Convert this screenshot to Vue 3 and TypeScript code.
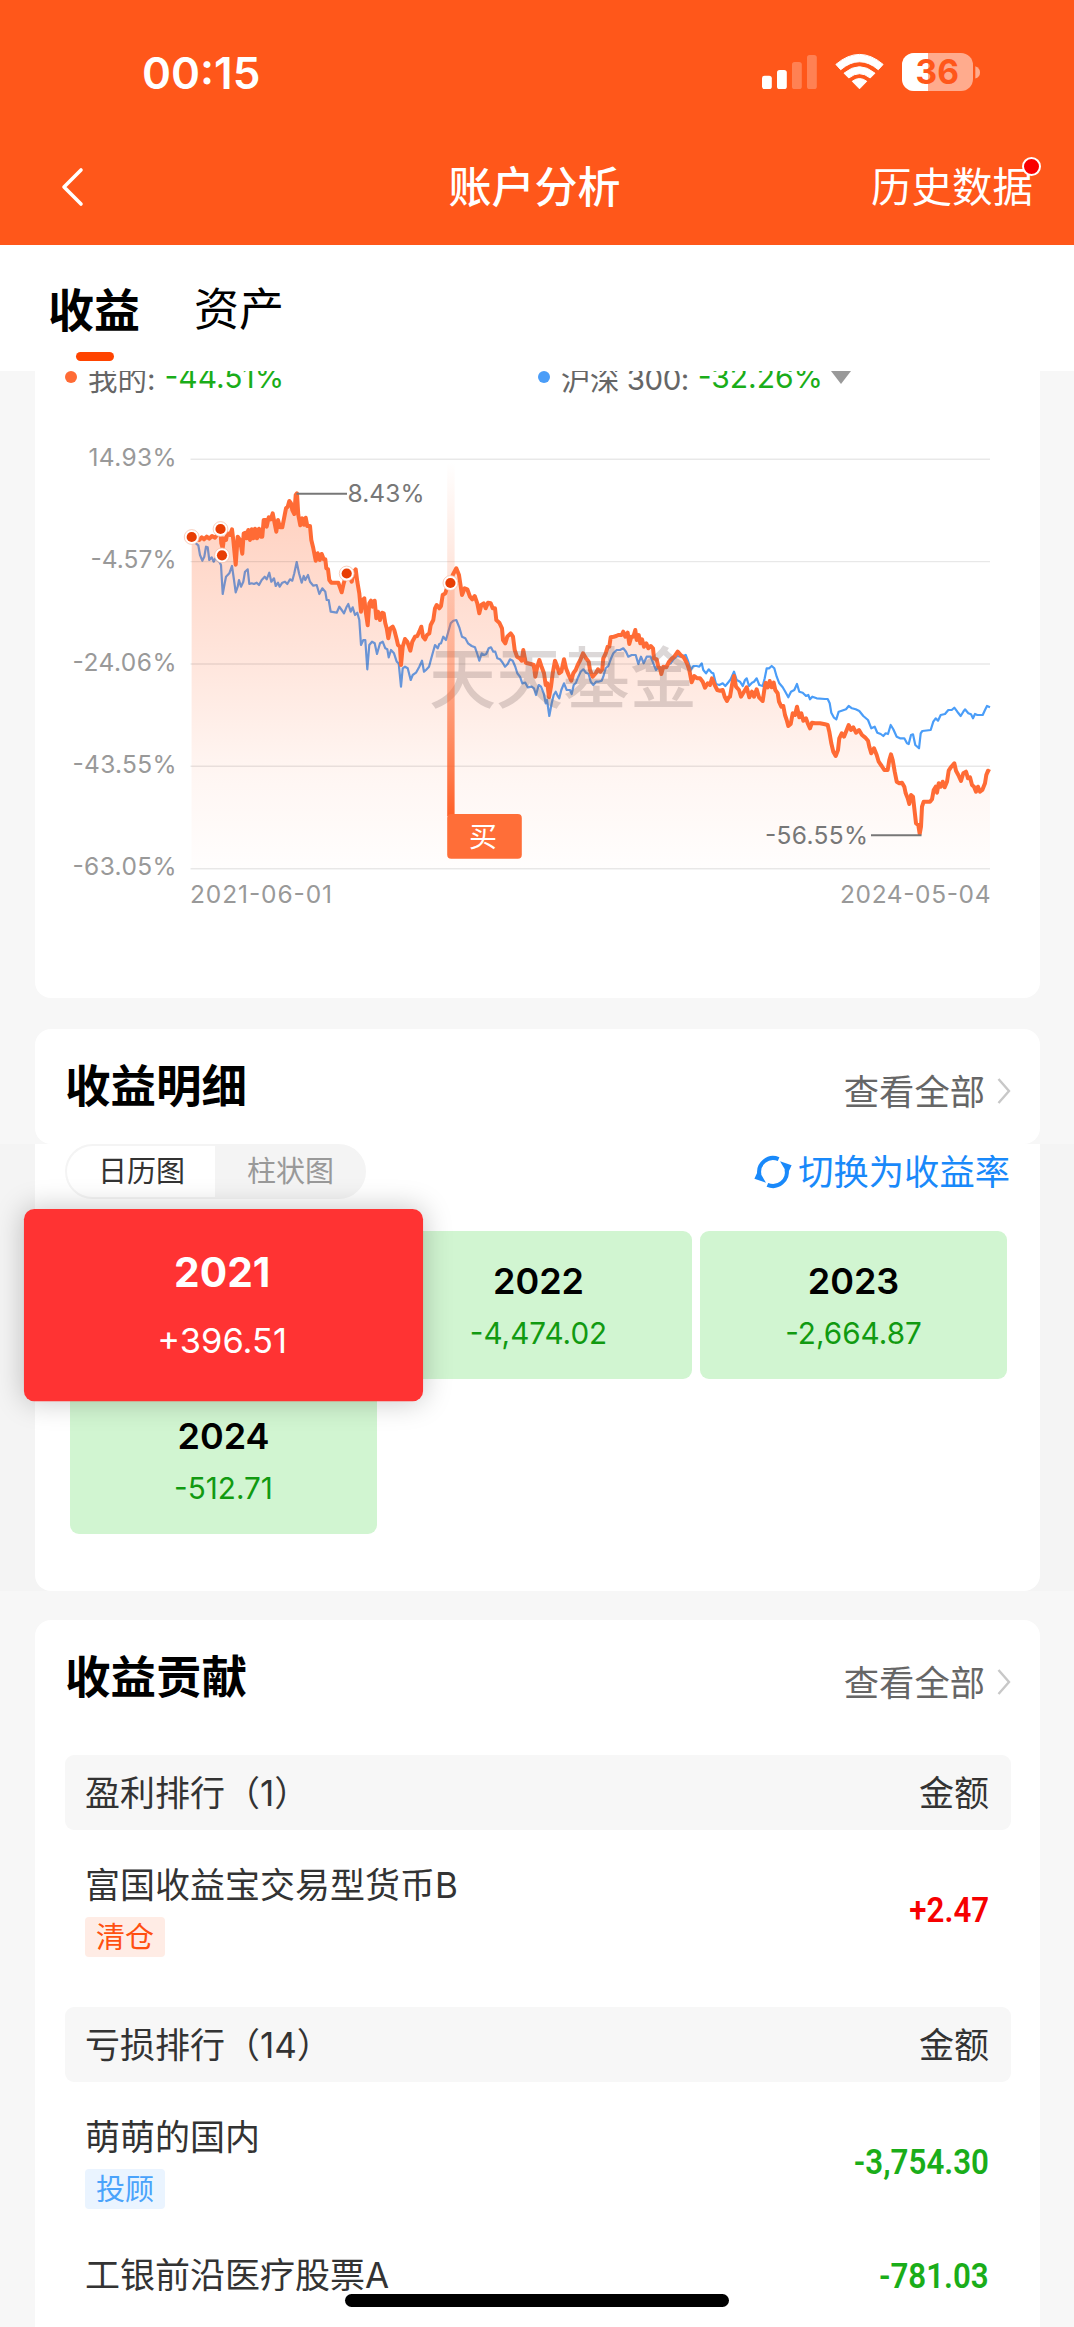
<script setup lang="ts">
interface Origin { x: number; y: number }
interface YearCell { year: string; value: string; active: boolean }
interface RankItem { name: string; tag?: string; tone?: 'warm' | 'cool'; amount: string; gain: boolean }
interface RankGroup { title: string; items: RankItem[] }

// Samples are stored in thirds of a pixel, relative to the origin of each stretch of the line.
const trace = (o: Origin, samples: string): string =>
  samples
    .split(' ')
    .map((p) => {
      const [x, y] = p.split(',').map(Number)
      return `${(o.x + x / 3).toFixed(1)},${(o.y + y / 3).toFixed(1)}`
    })
    .join(' ')

const early: Origin = { x: 170, y: 440 }
const middle: Origin = { x: 440, y: 540 }
const late: Origin = { x: 730, y: 600 }

const mine = [
  trace(early, '65,291 88,300 95,292 102,298 110,290 118,296 126,288 135,293 140,286 147,270 151,267 154,310 158,325 162,295 168,300 172,280 180,285 186,268 190,300 197,374 203,290 210,300 217,341 221,280 227,278 230,295 235,270 240,300 245,268 250,295 255,266 261,295 267,266 272,290 277,290 281,240 287,240 290,260 296,232 302,238 308,220 313,245 319,275 324,240 330,262 337,262 344,225 348,205 353,200 358,183 363,190 367,210 373,222 377,165 381,160 385,225 391,256 397,235 402,254 407,233 412,258 420,258 424,300 430,325 437,362 443,340 449,360 455,342 461,358 466,358 469,385 474,388 478,420 484,428 505,428 509,440 515,457 521,430 530,401 540,412 545,425 552,395 557,388 562,425 568,460 573,515 578,480 583,475 587,515 593,556 598,490 603,482 608,500 614,482 619,535 624,515 630,540 636,518 641,520 646,550 650,565 655,595 661,565 668,560 673,570 680,598 684,615 690,620 693,675 698,620 705,597 712,605 721,632 727,605 735,590 742,588 748,575 754,560 759,590 765,598 771,585 778,580 782,555 790,540 795,505 800,495 808,505'),
  trace(middle, '3,198 8,165 16,160 22,140 31,128 38,105 49,85 57,105 60,125 66,165 74,145 82,148 90,170 97,178 104,168 112,190 118,220 124,195 131,190 137,205 144,188 152,190 158,205 165,205 169,240 178,248 186,265 189,300 196,310 202,290 212,280 219,290 224,330 231,350 239,355 245,362 250,330 257,368 272,372 281,375 286,410 292,380 298,360 304,378 312,400 317,435 322,430 327,472 333,440 338,400 345,362 352,380 358,400 364,395 372,358 378,385 386,405 394,422 400,400 407,390 413,375 421,360 429,340 438,355 446,365 450,390 458,410 467,400 474,388 481,395 487,388 490,355 497,340 503,320 508,320 512,292 521,290 529,288 535,285 545,285 550,275 556,290 563,278 568,312 574,290 580,290 586,270 590,300 596,285 601,310 606,298 612,320 619,310 625,325 632,318 639,325 642,355 650,358 655,380 660,385 664,402 670,380 679,382 687,365 696,355 703,350 713,335 722,345 731,352 740,368 748,390 755,427 763,408 771,415 780,415 788,425 795,443 803,430 810,435 816,415 824,435 832,450 840,452 848,450 854,470 861,483 866,472'),
  trace(late, '0,290 6,255 12,228 18,260 27,270 33,290 42,275 50,262 58,292 66,275 72,290 80,268 87,292 98,303 103,270 107,248 113,262 119,243 125,262 131,248 136,270 143,280 147,305 154,320 160,318 165,345 170,360 175,378 182,372 188,340 195,345 201,320 208,352 214,340 220,362 228,355 234,372 240,385 246,368 255,370 270,370 285,373 293,375 298,395 304,430 310,455 317,468 324,450 328,415 335,400 342,410 350,390 356,375 363,390 370,382 378,398 387,390 396,405 405,412 414,422 418,440 424,460 432,445 440,465 446,485 455,498 463,510 473,510 478,480 483,463 488,480 494,515 500,545 508,550 516,548 523,560 527,580 533,595 538,612 543,585 549,590 553,625 558,670 565,675 569,702 573,680 576,620 581,605 600,605 606,598 611,570 617,560 621,578 626,550 632,560 638,545 644,562 651,545 656,512 664,500 673,490 678,512 685,525 693,543 700,520 708,515 714,535 720,532 726,555 732,560 738,575 744,560 750,575 757,570 765,550 769,525 774,512 780,515'),
].join(' ')

const benchmark = [
  trace(early, '65,300 75,308 85,316 90,345 97,362 103,350 108,320 113,322 118,360 125,352 131,365 136,355 148,365 153,375 158,462 164,430 168,410 178,400 186,378 192,420 197,457 203,440 207,420 213,440 220,425 225,395 233,388 238,432 245,430 252,432 260,428 267,435 275,420 284,410 290,418 298,398 304,425 312,415 317,438 324,428 329,440 337,428 345,425 352,432 360,418 367,422 373,400 380,366 387,400 395,428 401,408 406,420 414,405 420,425 430,437 440,435 448,462 457,445 466,455 470,480 476,480 482,515 500,518 508,500 515,510 522,520 530,500 535,492 542,515 548,502 555,525 562,518 568,540 573,615 580,600 586,600 592,688 598,615 606,605 614,610 621,642 630,610 638,605 646,625 652,628 656,652 663,630 672,640 680,665 686,670 693,740 698,685 705,680 713,685 722,720 728,705 738,698 748,680 756,662 762,695 768,690 777,680 785,650 795,615 803,625 808,612'),
  trace(middle, '3,310 10,290 18,300 25,275 32,250 40,242 49,240 58,262 66,290 76,295 84,310 95,318 105,322 112,342 118,362 125,340 132,345 139,342 146,325 153,322 160,335 166,335 172,355 180,358 188,368 195,380 203,372 210,358 218,362 226,380 232,400 240,410 247,430 256,428 263,442 275,440 282,445 288,465 296,435 303,440 311,460 317,490 321,480 328,528 335,490 341,465 347,455 353,468 358,475 364,450 372,430 380,450 390,450 395,462 401,435 408,428 415,410 422,395 430,388 438,398 446,402 452,425 460,435 468,425 475,425 485,422 490,410 497,385 505,378 512,358 520,340 530,330 540,330 550,325 558,335 565,350 575,345 587,345 595,372 603,350 611,370 620,350 632,350 640,370 648,390 656,380 664,395 672,380 682,375 692,370 700,358 712,348 722,350 737,345 745,365 752,390 760,378 770,378 778,380 785,370 790,390 798,400 806,388 815,398 820,400 828,432 838,435 848,430 856,438 864,428'),
  trace(late, '2,238 12,215 20,240 30,245 38,258 45,240 50,235 57,258 66,248 72,245 80,235 88,255 98,258 104,235 110,205 117,205 125,198 133,205 140,230 148,250 158,262 166,275 175,292 183,275 193,270 201,252 208,275 218,278 228,288 235,285 240,298 247,290 260,295 285,297 293,297 299,310 304,338 312,353 319,358 326,335 335,332 348,328 356,318 366,325 377,328 388,333 400,348 414,360 424,385 434,380 442,398 452,402 460,408 467,400 474,402 482,375 490,388 500,410 510,415 523,415 531,430 536,432 543,405 549,403 556,435 567,445 572,400 577,393 602,390 610,365 617,355 624,362 632,345 645,342 655,330 665,330 673,323 682,335 692,348 700,335 705,328 715,340 723,343 729,355 735,342 742,345 758,345 765,330 771,318 780,322'),
].join(' ')

const area = `191.5,868.7 ${mine} 990,868.7`

const axis = [
  { label: '14.93%', y: 459.3, w: 88 },
  { label: '-4.57%', y: 561.6, w: 86 },
  { label: '-24.06%', y: 664, w: 104 },
  { label: '-43.55%', y: 766.3, w: 104 },
  { label: '-63.05%', y: 868.7, w: 104 },
]

const markers = [
  { x: 191.7, y: 537 },
  { x: 220.5, y: 529 },
  { x: 222, y: 555.3 },
  { x: 346.7, y: 573.5 },
  { x: 450.4, y: 583 },
]

const years: YearCell[] = [
  { year: '2021', value: '+396.51', active: true },
  { year: '2022', value: '-4,474.02', active: false },
  { year: '2023', value: '-2,664.87', active: false },
  { year: '2024', value: '-512.71', active: false },
]

const groups: RankGroup[] = [
  {
    title: '盈利排行（1）',
    items: [{ name: '富国收益宝交易型货币B', tag: '清仓', tone: 'warm', amount: '+2.47', gain: true }],
  },
  {
    title: '亏损排行（14）',
    items: [
      { name: '萌萌的国内', tag: '投顾', tone: 'cool', amount: '-3,754.30', gain: false },
      { name: '工银前沿医疗股票A', amount: '-781.03', gain: false },
    ],
  },
]
</script>

<template>
  <div class="page">
    <header class="top">
      <div class="status">
        <span class="time">00:15</span>
        <svg class="indicators" width="222" height="44" viewBox="760 50 222 44">
          <rect x="762" y="75.7" width="9.8" height="13.4" rx="2.6" fill="#fff" />
          <rect x="777" y="70" width="9.8" height="19.1" rx="2.6" fill="#fff" />
          <rect x="792" y="62" width="9.8" height="27.1" rx="2.6" fill="#fff" fill-opacity=".25" />
          <rect x="807" y="55" width="9.8" height="34.1" rx="2.6" fill="#fff" fill-opacity=".25" />
          <path d="M835.9 64.4 Q859.5 44.4 883.1 64.4 L878.3 69.7 Q859.5 53.8 840.7 69.7 Z" fill="#fff" stroke="#fff" stroke-width="1" stroke-linejoin="round" />
          <path d="M844 73.2 Q859.5 60.2 875 73.2 L870.2 78 Q859.5 69.4 848.8 78 Z" fill="#fff" stroke="#fff" stroke-width="1" stroke-linejoin="round" />
          <path d="M852.2 81.3 Q859.5 75.8 866.8 81.3 L859.5 88.8 Z" fill="#fff" stroke="#fff" stroke-width="1" stroke-linejoin="round" />
          <clipPath id="cell"><rect x="902" y="53" width="71" height="38" rx="12" /></clipPath>
          <g clip-path="url(#cell)">
            <rect x="902" y="53" width="71" height="38" fill="#fff" fill-opacity=".5" />
            <rect x="902" y="53" width="26" height="38" fill="#fff" />
          </g>
          <path d="M975.3 66.3 Q980 68 980 72.4 Q980 77 975.3 78.6 Z" fill="#fff" fill-opacity=".5" />
          <text x="937.3" y="84.2" class="charge" text-anchor="middle">36</text>
        </svg>
      </div>
      <nav class="nav">
        <svg class="back" width="26" height="40" viewBox="0 0 26 40"><path d="M22 3 L5 20 L22 37" fill="none" stroke="#fff" stroke-width="3.6" stroke-linecap="round" stroke-linejoin="round" /></svg>
        <h1>账户分析</h1>
        <span class="history">历史数据<i class="dot"></i></span>
      </nav>
    </header>

    <div class="tabs">
      <span class="tab on">收益</span>
      <span class="tab">资产</span>
    </div>

    <section class="card chart-card">
      <div class="legend">
        <div class="series"><i class="bullet mine"></i><span>我的:</span><b>-44.51%</b></div>
        <div class="series"><i class="bullet bench"></i><span class="index">沪深 300:</span><b>-32.26%</b><i class="caret"></i></div>
      </div>
      <svg class="chart" width="1005" height="500" viewBox="35 420 1005 500">
        <defs>
          <linearGradient id="fill" gradientUnits="userSpaceOnUse" x1="0" y1="493" x2="0" y2="869">
            <stop offset="0" stop-color="#ff6b35" stop-opacity=".32" />
            <stop offset=".45" stop-color="#ff6b35" stop-opacity=".17" />
            <stop offset=".75" stop-color="#ff6b35" stop-opacity=".06" />
            <stop offset="1" stop-color="#ff6b35" stop-opacity=".01" />
          </linearGradient>
          <linearGradient id="beam" x1="0" y1="0" x2="0" y2="1">
            <stop offset="0" stop-color="#ff6b35" stop-opacity="0" />
            <stop offset=".3" stop-color="#ff6b35" stop-opacity=".17" />
            <stop offset=".6" stop-color="#ff6b35" stop-opacity=".5" />
            <stop offset="1" stop-color="#ff6028" stop-opacity="1" />
          </linearGradient>
        </defs>
        <polyline :points="benchmark" fill="none" stroke="#4a9df8" stroke-width="2.2" stroke-linejoin="round" />
        <polygon :points="area" fill="url(#fill)" />
        <g v-for="a in axis" :key="a.label">
          <line x1="190.5" x2="990" :y1="a.y" :y2="a.y" stroke="#000" stroke-opacity=".09" stroke-width="1.4" />
          <text class="tick" x="176.5" :y="a.y + 6.6" text-anchor="end" :textLength="a.w">{{ a.label }}</text>
        </g>
        <polyline :points="mine" fill="none" stroke="#ff6b35" stroke-width="4" stroke-linejoin="round" />
        <text class="watermark" x="429" y="703" textLength="268">天天基金</text>
        <rect x="447.2" y="462" width="7.4" height="354" fill="url(#beam)" />
        <g v-for="m in markers" :key="m.x">
          <circle :cx="m.x" :cy="m.y" r="7.4" fill="#fff" stroke="#f4b9a2" stroke-width=".7" />
          <circle :cx="m.x" :cy="m.y" r="5.1" fill="#e83e04" />
        </g>
        <path d="M296.5 493.8 H347" stroke="#777" stroke-width="2" />
        <text class="note" x="347.5" y="502.3" textLength="77">8.43%</text>
        <path d="M871 835.2 H921.5" stroke="#777" stroke-width="2" />
        <text class="note" x="765" y="843.6" textLength="103">-56.55%</text>
        <rect x="447.2" y="814" width="74.6" height="44.7" rx="4" fill="#ff6e38" />
        <text class="buy" x="483" y="846.5" text-anchor="middle">买</text>
        <text class="tick" x="190" y="903" textLength="142">2021-06-01</text>
        <text class="tick" x="990.5" y="903" text-anchor="end" textLength="150.5">2024-05-04</text>
      </svg>
    </section>

    <section class="card head-card">
      <h2>收益明细</h2>
      <span class="more"><span>查看全部</span><svg width="14" height="28" viewBox="0 0 14 28"><path d="M1.5 2 L12 14 L1.5 26" fill="none" stroke="#c8c8c8" stroke-width="2.4" /></svg></span>
    </section>
    <div class="band">
      <section class="detail">
        <div class="tools">
          <div class="segment"><span class="sel">日历图</span><span>柱状图</span></div>
          <span class="switch">
            <svg width="38" height="38" viewBox="0 0 38 38" fill="none" stroke="#1989fa" stroke-width="4">
              <path d="M5.5 22 A13.9 13.9 0 0 1 24.6 6.2" />
              <path d="M32.5 16 A13.9 13.9 0 0 1 13.4 31.8" />
              <path d="M26 8.3 L37.6 12.3 L33.6 21 Z M12 29.7 L0.4 25.7 L4.4 17 Z" fill="#1989fa" stroke="none" />
            </svg><span>切换为收益率</span></span>
        </div>
        <div class="years">
          <div v-for="y in years" :key="y.year" class="year" :class="{ active: y.active }">
            <strong>{{ y.year }}</strong>
            <span>{{ y.value }}</span>
          </div>
        </div>
      </section>
    </div>

    <section class="card rank-card">
      <div class="rank-head">
        <h2>收益贡献</h2>
        <span class="more"><span>查看全部</span><svg width="14" height="28" viewBox="0 0 14 28"><path d="M1.5 2 L12 14 L1.5 26" fill="none" stroke="#c8c8c8" stroke-width="2.4" /></svg></span>
      </div>
      <div v-for="g in groups" :key="g.title" class="group">
        <div class="bar"><span>{{ g.title }}</span><span>金额</span></div>
        <div v-for="it in g.items" :key="it.name" class="item" :class="{ plain: !it.tag }">
          <div class="info">
            <span class="fund">{{ it.name }}</span>
            <span v-if="it.tag" class="tag" :class="it.tone">{{ it.tag }}</span>
          </div>
          <span class="amount" :class="{ gain: it.gain }">{{ it.amount }}</span>
        </div>
      </div>
    </section>
    <div class="home"></div>
  </div>
</template>

<style>
body { background: #f7f7f7; overflow: hidden; }
</style>

<style scoped>
* { box-sizing: border-box; }
.page {
  position: relative;
  width: 1074px;
  height: 2327px;
  overflow: hidden;
  background: #f7f7f7;
  color: #333;
  font-family: Inter, "Noto Sans CJK SC", sans-serif;
  white-space: nowrap;
}
h1, h2 { margin: 0; }
i, b { font-style: normal; font-weight: 400; }
svg { display: block; flex: none; }

.top { height: 245px; background: #ff571a; color: #fff; }
.status { display: flex; justify-content: space-between; height: 129px; padding: 50px 92px 0 142px; }
.time { font-size: 44px; line-height: 47px; font-weight: 600; }
.charge { font-size: 33.5px; font-weight: 700; fill: #ff571a; }
.nav { display: flex; align-items: center; justify-content: space-between; height: 116px; padding: 0 41px 0 59px; }
.back { margin-right: 113px; }
h1 { font-size: 43px; font-weight: 500; line-height: 60px; }
.history { position: relative; font-size: 40.5px; line-height: 60px; padding-top: 2px; }
.dot { position: absolute; top: 1px; right: -8px; width: 19px; height: 19px; border: 2px solid #fff; border-radius: 50%; background: #fa0000; }

.tabs { display: flex; gap: 54px; height: 126px; padding: 35px 0 0 49px; background: #fff; font-size: 45px; line-height: 60px; color: #000; }
.tab { height: 83px; }
.tab.on { font-weight: 700; font-size: 46px; margin-left: -1px; display: flex; flex-direction: column; align-items: center; }
.tab.on::after { content: ""; width: 38px; height: 9px; margin: 12px 0 0 2px; border-radius: 5px; background: #ff4400; }

.card { margin: 0 34px 0 35px; background: #fff; }
.chart-card { height: 627px; border-radius: 0 0 16px 16px; overflow: hidden; }
.legend { display: flex; height: 49px; padding-left: 30px; }
.series { display: flex; align-items: center; width: 473px; height: 40px; margin-top: -14px; font-size: 29.5px; color: #666; }
.bullet { width: 12px; height: 12px; border-radius: 50%; margin-right: 11px; }
.bullet.mine { background: #ff6b35; }
.bullet.bench { background: #4a9df8; }
.index { letter-spacing: -.5px; }
.series b { margin-left: 9px; font-size: 30px; color: #1aad19; }
.caret { margin-left: 8px; border: 10px solid transparent; border-top: 13px solid #999; border-bottom: 0; }
.tick { font-size: 24.5px; fill: #999; }
.note { font-size: 24.5px; fill: #777; }
.buy { font-size: 28px; fill: #fff; }
.watermark { font-size: 67px; font-weight: 500; fill: #6b5d5a; fill-opacity: .24; }

.head-card { display: flex; justify-content: space-between; height: 115px; margin-top: 31px; padding: 0 29px 0 30px; border-radius: 16px; }
h2 { font-size: 45.5px; line-height: 60px; font-weight: 700; color: #000; padding-top: 28px; }
.more { display: flex; align-items: center; gap: 12px; height: 60px; margin-top: 32px; font-size: 35.3px; color: #666; }
.more span, .switch span { padding-bottom: 4px; }

.band { height: 447px; background: #f4f4f4; }
.detail { height: 447px; margin: 0 34px 0 35px; padding: 0 30px; background: #fff; border-radius: 0 0 16px 16px; }
.tools { display: flex; justify-content: space-between; align-items: center; height: 55px; }
.segment { display: flex; width: 301px; height: 55px; border: 2px solid #f4f4f4; border-radius: 28px; overflow: hidden; background: #f4f4f4; font-size: 29px; line-height: 51px; color: #999; }
.segment span { flex: 1; text-align: center; padding-left: 2px; }
.segment .sel { background: #fff; color: #333; padding-left: 1px; }
.switch { display: flex; align-items: center; gap: 6px; font-size: 35.3px; color: #1989fa; }
.years { display: grid; grid-template-columns: repeat(3, 307px); gap: 7.5px 8px; padding: 32px 0 0 5px; }
.year { display: flex; flex-direction: column; align-items: center; justify-content: center; height: 147.5px; padding-top: 6px; border-radius: 9px; background: #d1f5d1; }
.year strong { font-size: 36px; line-height: 52px; font-weight: 600; color: #000; }
.year span { font-size: 29.7px; line-height: 53px; color: #119a11; }
.year.active { z-index: 1; transform: scale(1.3); background: #f33; border-radius: 8px; box-shadow: 0 0 22px rgba(0, 0, 0, .22); padding: 3px 2px 0 0; }
.year.active strong { color: #fff; font-size: 31.3px; font-weight: 700; }
.year.active span { color: #fff; font-size: 26.5px; }

.rank-card { height: 720px; margin-top: 29px; padding: 0 29px 0 30px; border-radius: 16px 16px 0 0; }
.rank-head { display: flex; justify-content: space-between; height: 135px; }
.bar { display: flex; justify-content: space-between; align-items: center; height: 75px; padding: 0 22px 4px 20px; border-radius: 9px; background: #f7f7f7; font-size: 35px; }
.item { display: flex; justify-content: space-between; height: 177px; padding: 29px 22px 0 20px; }
.info { display: flex; flex-direction: column; align-items: flex-start; }
.fund { font-size: 35px; line-height: 52px; }
.tag { height: 40px; margin-top: 6px; padding: 1px 11px 0; border-radius: 4px; font-size: 29px; line-height: 40px; }
.tag.warm { background: #ffece5; color: #ff5010; }
.tag.cool { background: #eaf4ff; color: #4aa3fb; }
.amount { height: 50px; margin-top: 27px; font-family: Roboto, Inter, sans-serif; font-weight: 600; font-size: 35px; line-height: 50px; color: #1aad19; transform: scaleX(.895); transform-origin: right; }
.amount.gain { color: #f60000; }
.plain { height: 60px; padding-top: 0; margin-top: -10px; }
.plain .amount { margin-top: 3px; }
.home { position: absolute; left: 345px; bottom: 20px; width: 384px; height: 13px; border-radius: 7px; background: #000; }
</style>
